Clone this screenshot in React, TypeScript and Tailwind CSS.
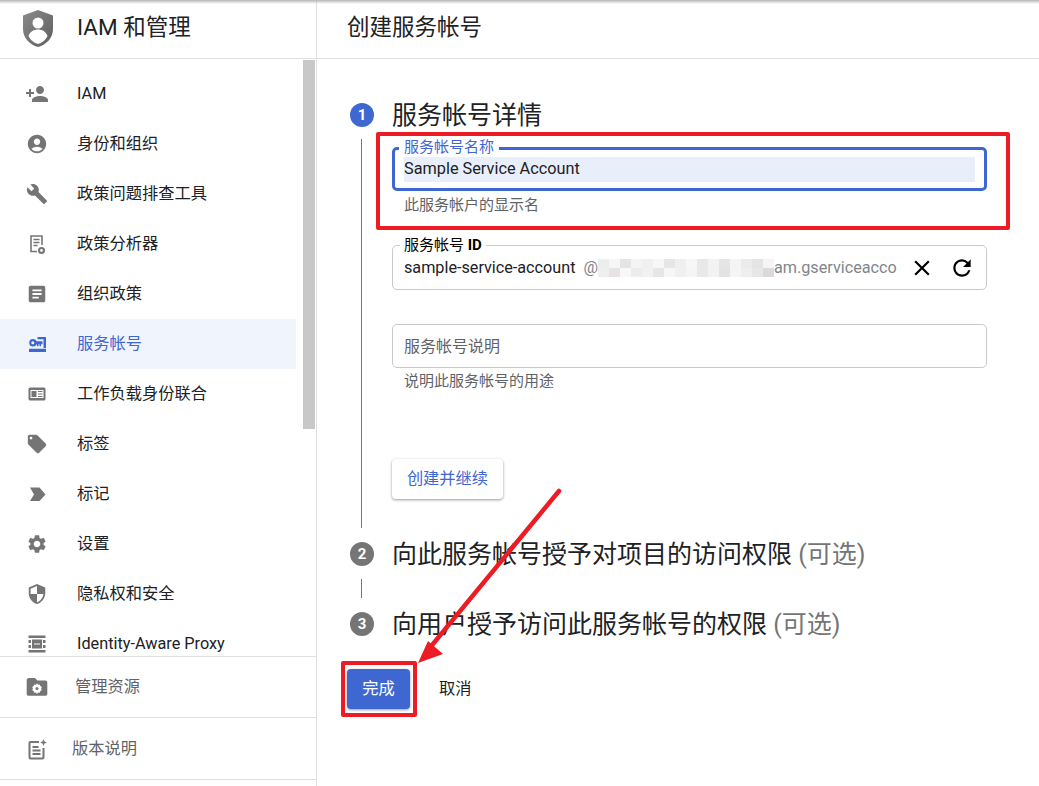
import type { ReactNode } from "react";
import {
  MdAccountCircle,
  MdArticle,
  MdBuild,
  MdClose,
  MdLocalOffer,
  MdPersonAdd,
  MdRefresh,
  MdSecurity,
  MdSettings,
} from "react-icons/md";

const FONT = "[font-family:Roboto,'Noto_Sans_CJK_SC',sans-serif]";

function AppShield() {
  return (
    <svg width="32" height="38" viewBox="0 0 32 38" className="shrink-0">
      <defs>
        <linearGradient id="shield" x1="0" y1="0" x2="1" y2="1">
          <stop offset="0" stopColor="#8a8a8a" />
          <stop offset="1" stopColor="#5f5f5f" />
        </linearGradient>
      </defs>
      <path d="M16 0 31 5.500V19C31 28 24.500 34.500 16 37 7.500 34.500 1 28 1 19V5.500Z" fill="url(#shield)" />
      <circle cx="16" cy="13" r="5.500" fill="#fff" />
      <path d="M6.500 26c1.500-4.500 5.500-6.500 9.500-6.500s8 2 9.500 6.500C23.500 30.500 19.500 33 16 34 12.500 33 8.500 30.500 6.500 26Z" fill="#fff" />
    </svg>
  );
}

function AnalyzerIcon() {
  return (
    <svg width="24" height="24" viewBox="0 0 24 24" fill="none">
      <path d="M17 13V4H6v15.500h6" stroke="#757575" strokeWidth="1.600" />
      <path d="M8.500 7.500h6M8.500 10.500h6M8.500 13.500h4" stroke="#757575" strokeWidth="1.300" />
      <circle cx="16.500" cy="18.500" r="3.500" fill="#757575" />
      <circle cx="16.500" cy="18.500" r="1.400" fill="#fff" />
    </svg>
  );
}

function ServiceAccountIcon() {
  return (
    <svg width="24" height="24" viewBox="0 0 24 24" fill="#3f67d2">
      <path d="M12.500 5H21v11h-2.500V7.200h-6ZM4 16.800h17V20H4Z" />
      <circle cx="8" cy="10.800" r="3.800" />
      <path d="M10 9.300h7.500v3H16v2h-1.500v-2h-1v2H12v-2h-2Z" />
      <circle cx="7.800" cy="10.800" r="1.500" fill="#f0f4fd" />
    </svg>
  );
}

function WorkloadIcon() {
  return (
    <svg width="24" height="24" viewBox="0 0 24 24">
      <rect x="3.500" y="5.500" width="17" height="13" rx="1.500" fill="#757575" />
      <rect x="5.500" y="8" width="13" height="8" fill="#fff" />
      <rect x="6.500" y="9" width="5" height="6" fill="#757575" />
      <path d="M13 9.500h4.500M13 12h4.500M13 14.500h4.500" stroke="#757575" strokeWidth="1.200" />
    </svg>
  );
}

function TagMarkIcon() {
  return (
    <svg width="24" height="24" viewBox="0 0 24 24" fill="#757575">
      <path d="M5 5.500h9.500L20.500 12.500 14.500 19H5L9 12.500Z" />
    </svg>
  );
}

function ProxyIcon() {
  return (
    <svg width="24" height="24" viewBox="0 0 24 24" fill="#757575">
      <path d="M3.500 3.500h17V6h-17ZM3.500 18h17v2.500h-17ZM7 7.500h10V16.500H7ZM3.500 8H6v3H3.500ZM18 8h2.500v3H18ZM3.500 13H6v3H3.500ZM18 13h2.500v3H18Z" />
      <path d="M9 12h6" stroke="#fff" strokeWidth="1" />
    </svg>
  );
}

function ManageIcon() {
  return (
    <svg width="24" height="24" viewBox="0 0 24 24">
      <path d="M4 3h6l2.500 2.500H20.500c1 0 1.800.8 1.800 1.800V19c0 1-.8 1.800-1.800 1.800H3.500c-1 0-1.800-.8-1.800-1.800V5C1.700 3.900 2.900 3 4 3Z" fill="#757575" />
      <path d="M12 8.800l1 1.400 1.700-.2.700 1.600 1.400 1-.7 1.500.7 1.500-1.400 1-.7 1.600-1.700-.2-1 1.400-1-1.400-1.700.2-.7-1.600-1.400-1 .7-1.500-.7-1.500 1.400-1 .7-1.600 1.700.2Z" fill="#fff" transform="translate(0 -.5)" />
      <circle cx="12" cy="13.600" r="1.500" fill="#757575" />
    </svg>
  );
}

function NotesIcon() {
  return (
    <svg width="24" height="24" viewBox="0 0 24 24" fill="none">
      <path d="M14 5H5.500a1 1 0 0 0-1 1v14.500a1 1 0 0 0 1 1h12a1 1 0 0 0 1-1V11" stroke="#757575" strokeWidth="2" />
      <path d="M7.500 10h6M7.500 13.500h8M7.500 17h8" stroke="#757575" strokeWidth="1.800" />
      <path d="M18.500 2l1 2.500L22 5.500l-2.500 1-1 2.500-1-2.500L15 5.500l2.500-1Z" fill="#757575" />
    </svg>
  );
}

const navItems: { label: string; icon: ReactNode; active?: boolean }[] = [
  { label: "IAM", icon: <MdPersonAdd size={24} color="#757575" /> },
  { label: "身份和组织", icon: <MdAccountCircle size={22} color="#757575" /> },
  { label: "政策问题排查工具", icon: <MdBuild size={22} color="#757575" /> },
  { label: "政策分析器", icon: <AnalyzerIcon /> },
  { label: "组织政策", icon: <MdArticle size={22} color="#757575" /> },
  { label: "服务帐号", icon: <ServiceAccountIcon />, active: true },
  { label: "工作负载身份联合", icon: <WorkloadIcon /> },
  { label: "标签", icon: <MdLocalOffer size={22} color="#757575" /> },
  { label: "标记", icon: <TagMarkIcon /> },
  { label: "设置", icon: <MdSettings size={22} color="#757575" /> },
  { label: "隐私权和安全", icon: <MdSecurity size={22} color="#757575" /> },
  { label: "Identity-Aware Proxy", icon: <ProxyIcon /> },
];

function NavRow({ label, icon, active }: { label: string; icon: ReactNode; active?: boolean }) {
  return (
    <div
      className={`flex h-[50px] w-[296px] items-center pl-[25px] text-[16.250px] ${
        active ? "bg-[#f0f4fd] text-[#3f67d2]" : "text-[#202124]"
      }`}
    >
      <span className="flex w-[24px] justify-center">{icon}</span>
      <span className="ml-[28px] whitespace-nowrap">{label}</span>
    </div>
  );
}

function Sidebar() {
  return (
    <aside className="relative flex h-full w-[317px] shrink-0 flex-col border-r border-[#e0e0e0]">
      <div className="flex h-[59px] shrink-0 items-center gap-[23px] border-b border-[#e0e0e0] pl-[22px]">
        <AppShield />
        <span className="pb-[2px] text-[22.500px] text-[#202124]">IAM 和管理</span>
      </div>
      <nav className="h-[597px] shrink-0 overflow-hidden pt-[10px]">
        {navItems.map((item) => (
          <NavRow key={item.label} {...item} />
        ))}
      </nav>
      {/* scrollbar thumb */}
      <div className="absolute left-[303px] top-[60px] h-[369px] w-[12px] bg-[#c8c8c8]" />
      <div className="flex h-[62px] shrink-0 items-center border-y border-[#e0e0e0] pl-[25px] text-[16.250px] text-[#5f6368]">
        <ManageIcon />
        <span className="ml-[26px]">管理资源</span>
      </div>
      <div className="flex h-[62px] shrink-0 items-center border-b border-[#e0e0e0] pl-[25px] text-[16.250px] text-[#5f6368]">
        <NotesIcon />
        <span className="ml-[23px] pt-[2px]">版本说明</span>
      </div>
    </aside>
  );
}

function StepHeading({ n, active, children }: { n: number; active?: boolean; children: ReactNode }) {
  return (
    <div className="flex h-[24px] items-center gap-[18px]">
      <span
        className={`flex h-[24px] w-[24px] shrink-0 items-center justify-center rounded-full text-[15px] font-bold text-white ${
          active ? "bg-[#3f67d2]" : "bg-[#757575]"
        }`}
      >
        {n}
      </span>
      <span className="whitespace-nowrap pt-[2px] text-[25px] leading-[32px] text-[#202124]">{children}</span>
    </div>
  );
}

const blurCells = [
  "#ececec", "#f6f6f6", "#e4e4e4", "#f4f4f4", "#f0f0f0", "#f7f7f7", "#e6e6e6", "#efefef",
  "#f7f7f7", "#e8e8e8", "#f2f2f2", "#e5e5e5", "#f4f4f4", "#ebebeb", "#e4e4e4", "#f5f5f5",
  "#eeeeee", "#e6e2e6", "#f8f8f8", "#ececec", "#f1f1f1", "#e6e6e6", "#f6f6f6", "#f0f0f0",
  "#f5f5f5", "#e9e9e9", "#f2f2f2", "#e3e3e3", "#f5f5f5", "#eeeeee", "#e7e7e7", "#dcd8dc",
];

function BlurredId() {
  return (
    <svg width="176" height="18" viewBox="0 0 176 18" className="shrink-0">
      {blurCells.map((c, i) => (
        <g key={i}>
          <rect x={(i % 16) * 11} y={i < 16 ? 0 : 9} width="11" height="9" fill={c} />
        </g>
      ))}
    </svg>
  );
}

function DetailsForm() {
  return (
    <div className="ml-[11px] w-[626px] border-l border-[#757575] pb-[29px] pl-[30px] pt-[8px]">
      {/* display name, focused */}
      <div className="relative flex h-[44px] w-[595px] items-center rounded-[5px] border-[3px] border-[#3f67d2] pl-[9px] pr-[9px]">
        <span className="absolute -top-[12px] left-[4px] bg-white px-[5px] text-[15px] leading-[18px] text-[#3f67d2]">
          服务帐号名称
        </span>
        <div className="flex h-[25px] w-full items-center bg-[#e8effb] text-[16.300px] text-[#202124]">
          Sample Service Account
        </div>
      </div>
      <p className="mt-[5px] pl-[12px] text-[15px] leading-[18px] text-[#5f6368]">此服务帐户的显示名</p>

      {/* account id */}
      <div className="relative mt-[31px] flex h-[45px] w-[595px] items-center rounded-[5px] border border-[#c9c9c9] pl-[11px] pr-[13px] text-[16.200px]">
        <span className="absolute -top-[10px] left-[7px] bg-white px-[4px] text-[15px] leading-[18px] text-[#000]">
          服务帐号 <b className="font-bold">ID</b>
        </span>
        <span className="whitespace-nowrap pt-[2px] text-[#202124]">sample-service-account</span>
        <span className="ml-[8px] pt-[2px] text-[#80868b]">@</span>
        <BlurredId />
        <span className="pt-[2px] text-[#80868b]">am.gserviceacco</span>
        <MdClose size={26} color="#000" className="ml-[12px] shrink-0" />
        <MdRefresh size={26} color="#000" className="ml-[14px] shrink-0" />
      </div>

      {/* description */}
      <div className="mt-[34px] flex h-[44px] w-[595px] items-center rounded-[5px] border border-[#c9c9c9] pl-[11px] pt-[2px] text-[16px] text-[#5f6368]">
        服务帐号说明
      </div>
      <p className="mt-[4px] pl-[12px] text-[15px] leading-[18px] text-[#5f6368]">说明此服务帐号的用途</p>

      <button className="mt-[69px] flex h-[40px] w-[111px] items-center justify-center rounded-[4px] bg-white text-[16.250px] text-[#3f67d2] shadow-[0_1px_3px_rgba(0,0,0,0.4)]">
        创建并继续
      </button>
    </div>
  );
}

function Annotations() {
  return (
    <>
      <div className="pointer-events-none absolute left-[376px] top-[132px] h-[98px] w-[634px] rounded-[2px] border-[4px] border-[#ed1c24]" />
      <div className="pointer-events-none absolute left-[341px] top-[661px] h-[56px] w-[76px] rounded-[2px] border-[4px] border-[#ed1c24]" />
      <svg className="pointer-events-none absolute left-[400px] top-[480px]" width="170" height="190" viewBox="400 480 170 190">
        <path d="M559 491 428 650" stroke="#ed1c24" strokeWidth="4.500" strokeLinecap="round" />
        <path d="M418 663 428 641 443 654Z" fill="#ed1c24" />
      </svg>
    </>
  );
}

export default function App() {
  return (
    <div className={`relative flex h-[786px] w-[1039px] overflow-hidden bg-white ${FONT}`}>
      <Sidebar />
      <main className="min-w-0 flex-1">
        <div className="flex h-[59px] items-center border-b border-[#e0e0e0] pb-[2px] pl-[30px] text-[22.500px] text-[#202124]">
          创建服务帐号
        </div>
        <div className="pl-[33px] pt-[44px]">
          <StepHeading n={1} active>
            服务帐号详情
          </StepHeading>
          <div className="mt-[12px]">
            <DetailsForm />
          </div>
          <div className="mt-[14px]">
            <StepHeading n={2}>
              向此服务帐号授予对项目的访问权限 <span className="text-[#757575]">(可选)</span>
            </StepHeading>
          </div>
          <div className="ml-[11px] mt-[13px] h-[19px] border-l border-[#757575]" />
          <div className="mt-[14px]">
            <StepHeading n={3}>
              向用户授予访问此服务帐号的权限 <span className="text-[#757575]">(可选)</span>
            </StepHeading>
          </div>
          <div className="-ml-[3px] mt-[33px] flex items-center">
            <button className="h-[40px] w-[63px] rounded-[4px] bg-[#3f67d2] text-[16.250px] text-white shadow-[0_1px_3px_rgba(0,0,0,0.4)]">
              完成
            </button>
            <span className="ml-[29px] text-[16.250px] text-[#202124]">取消</span>
          </div>
        </div>
      </main>
      <div className="pointer-events-none absolute inset-x-0 top-0 h-[4px] bg-gradient-to-b from-[#b5b5b5] to-transparent" />
      <Annotations />
    </div>
  );
}
